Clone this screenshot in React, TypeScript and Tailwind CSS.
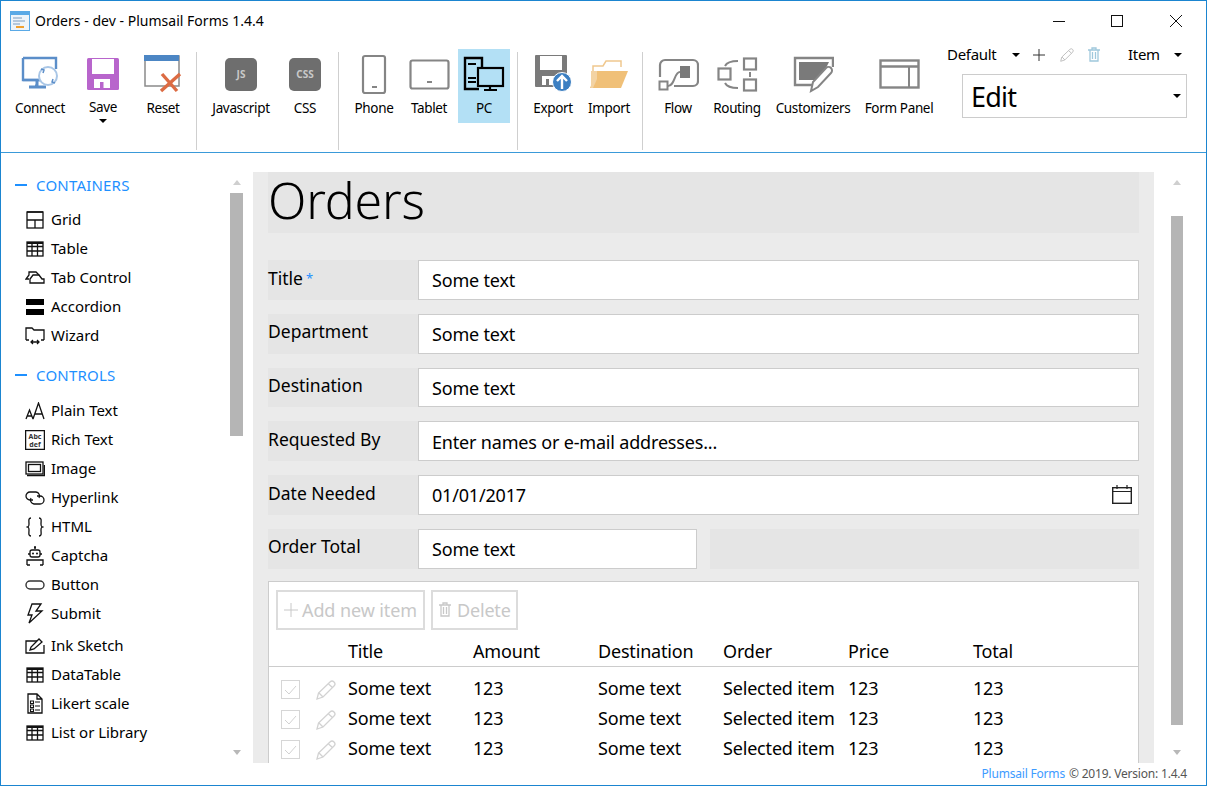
import React from "react";

const font = "font-['Noto_Sans','Open_Sans',sans-serif]";

function Svg({ w, h, children, className }: { w: number; h: number; children: React.ReactNode; className?: string }) {
  return (
    <svg width={w} height={h} viewBox={`0 0 ${w} ${h}`} fill="none" className={"block shrink-0 " + (className ?? "")}>
      {children}
    </svg>
  );
}

const ConnectIcon = () => (
  <Svg w={38} h={36}>
    <path d="M2 2h33v11M20 24H2V2" stroke="#5b8ec9" strokeWidth="2.4" />
    <path d="M2 24h20" stroke="#5b8ec9" strokeWidth="2.4" />
    <path d="M16 25v5h-2M8 31h17" stroke="#5b8ec9" strokeWidth="3" />
    <circle cx="27" cy="20" r="9" fill="#fff" stroke="#a9c6e6" strokeWidth="2" />
    <path d="M20 13l3 1-1 3M34 27l-3-1 1-3" stroke="#5b8ec9" strokeWidth="1.5" />
  </Svg>
);
const SaveIcon = () => (
  <Svg w={32} h={32}>
    <rect x="0" y="0" width="32" height="32" rx="1.500" fill="#b865cc" />
    <rect x="5" y="1" width="22" height="15" fill="#fff" />
    <rect x="7" y="21" width="16" height="9" fill="#fff" />
    <rect x="13" y="24" width="3.500" height="6" fill="#b865cc" />
  </Svg>
);
const ResetIcon = () => (
  <Svg w={38} h={38}>
    <rect x="1" y="1" width="34" height="30" fill="#fff" stroke="#8a8a8a" strokeWidth="1.5" />
    <rect x="0" y="0" width="35" height="6" fill="#4c86c4" />
    <path d="M17 36L36 19M18 19l15 17" stroke="#dc6b43" strokeWidth="3.4" />
  </Svg>
);
const Badge = ({ t, s }: { t: string; s: number }) => (
  <Svg w={32} h={33}>
    <rect x="0" y="0" width="32" height="33" rx="5" fill="#6e6e6e" />
    <text x="16" y="20" textAnchor="middle" fontSize={s} fontWeight="700" fill="#c9c9c9" fontFamily="Noto Sans">{t}</text>
  </Svg>
);
const PhoneIcon = () => (
  <Svg w={26} h={41}>
    <rect x="2" y="2" width="22" height="37" rx="2" fill="#fff" stroke="#858585" strokeWidth="2.2" />
    <rect x="11" y="32" width="5" height="2" fill="#858585" />
  </Svg>
);
const TabletIcon = () => (
  <Svg w={41} h={31}>
    <rect x="1.5" y="1.5" width="38" height="28" rx="2" fill="#fff" stroke="#858585" strokeWidth="2.2" />
    <rect x="18" y="22" width="5" height="2" fill="#858585" />
  </Svg>
);
const PcIcon = () => (
  <Svg w={42} h={36}>
    <path d="M16 33H2V2h17v11" stroke="#000" strokeWidth="2.4" />
    <path d="M5 8h8M5 22h8M5 26h8" stroke="#000" strokeWidth="2" />
    <rect x="15" y="12" width="25" height="18" fill="#b3e0f5" stroke="#000" strokeWidth="2.2" />
    <path d="M27 30v4M21 34h13" stroke="#000" strokeWidth="2.2" />
  </Svg>
);
const ExportIcon = () => (
  <Svg w={37} h={38}>
    <rect x="0" y="0" width="32" height="32" rx="1" fill="#7a7a7a" />
    <rect x="5" y="1" width="22" height="14" fill="#fff" />
    <rect x="7" y="21" width="14" height="9" fill="#fff" />
    <rect x="11" y="24" width="3" height="6" fill="#7a7a7a" />
    <circle cx="27" cy="27" r="9.5" fill="#3c7fc2" stroke="#fff" strokeWidth="1" />
    <path d="M27 34V22M22 26l5-5 5 5" stroke="#fff" strokeWidth="2.4" />
  </Svg>
);
const ImportIcon = () => (
  <Svg w={38} h={29}>
    <path d="M3 25V6h10l3-5h15v6" stroke="#f0c88e" strokeWidth="1.5" />
    <path d="M0 28L7 11h31l-7 17z" fill="#f0c078" />
    <path d="M1 11h6v8l-4 9H1z" fill="#f3d3a3" />
  </Svg>
);
const FlowIcon = () => (
  <Svg w={41} h={33}>
    <path d="M2 19V7a5 5 0 0 1 5-5h28a5 5 0 0 1 5 5v16a5 5 0 0 1-5 5H16" stroke="#858585" strokeWidth="2.2" />
    <rect x="22" y="8" width="10" height="12" fill="#7a7a7a" />
    <path d="M22 14c-6 0-5 14-12 14" stroke="#858585" strokeWidth="2" />
    <rect x="1.5" y="23.5" width="8" height="8" fill="#fff" stroke="#858585" strokeWidth="2" />
  </Svg>
);
const RoutingIcon = () => (
  <Svg w={41} h={35}>
    <rect x="1.5" y="11.5" width="12" height="11" stroke="#858585" strokeWidth="2.2" />
    <rect x="27" y="1.5" width="12" height="11" stroke="#858585" strokeWidth="2.2" />
    <rect x="27" y="22.5" width="12" height="11" stroke="#858585" strokeWidth="2.2" />
    <path d="M33 15v5M8 9c2-4 7-5 13-5M8 26c2 4 7 5 13 5" stroke="#858585" strokeWidth="2" />
  </Svg>
);
const CustomizersIcon = () => (
  <Svg w={41} h={37}>
    <path d="M26 29H2V2h38v9" stroke="#858585" strokeWidth="2.4" />
    <path d="M6 6h30L27 24H6z" fill="#7a7a7a" />
    <path d="M18 35l2-9 13-14a3 3 0 0 1 5 5L25 31z" fill="#fff" stroke="#858585" strokeWidth="2" />
  </Svg>
);
const PanelIcon = () => (
  <Svg w={41} h={30}>
    <rect x="1.5" y="1.5" width="38" height="27" fill="#fff" stroke="#858585" strokeWidth="2.4" />
    <path d="M1 7.5h39" stroke="#858585" strokeWidth="2.4" />
    <path d="M30 8v20" stroke="#858585" strokeWidth="2" />
  </Svg>
);

const Caret = ({ c = "#000" }: { c?: string }) => (
  <Svg w={8} h={4}><path d="M0 0h8L4 4z" fill={c} /></Svg>
);

const ribbonGroups = [
  [
    { l: "Connect", c: "w-[60px] ml-[9px]", i: <ConnectIcon /> },
    { l: "Save", c: "w-[62px] ml-[2px]", i: <SaveIcon />, caret: true },
    { l: "Reset", c: "w-[54px] ml-[2px]", i: <ResetIcon /> },
  ],
  [
    { l: "Javascript", c: "w-[70px] ml-[9px]", i: <Badge t="JS" s={10} /> },
    { l: "CSS", c: "w-[50px] ml-[4px]", i: <Badge t="CSS" s={10} /> },
  ],
  [
    { l: "Phone", c: "w-[52px] ml-[9px]", i: <PhoneIcon /> },
    { l: "Tablet", c: "w-[52px] ml-[3px]", i: <TabletIcon /> },
    { l: "PC", c: "w-[52px] ml-[3px] bg-[#b3e0f5]", i: <PcIcon /> },
  ],
  [
    { l: "Export", c: "w-[56px] ml-[7px]", i: <ExportIcon /> },
    { l: "Import", c: "w-[52px] ml-[2px]", i: <ImportIcon /> },
  ],
  [
    { l: "Flow", c: "w-[52px] ml-[9px]", i: <FlowIcon /> },
    { l: "Routing", c: "w-[58px] ml-[4px]", i: <RoutingIcon /> },
    { l: "Customizers", c: "w-[82px] ml-[6px]", i: <CustomizersIcon /> },
    { l: "Form Panel", c: "w-[80px] ml-[5px]", i: <PanelIcon /> },
  ],
];
const sepMargins = ["ml-[6px]", "ml-[8px]", "ml-[7px]", "ml-[7px]"];

function RibbonButton({ l, c, i, caret }: { l: string; c: string; i: React.ReactNode; caret?: boolean }) {
  return (
    <div className={"relative h-[74px] flex flex-col items-center shrink-0 " + c}>
      <div className="h-[50px] flex items-center justify-center">{i}</div>
      <div className="text-[13.5px] leading-[18px] tracking-[-0.35px] whitespace-nowrap">{l}</div>
      {caret && <div className="mt-[3px]"><Caret /></div>}
    </div>
  );
}

const s = { stroke: "#111", strokeWidth: 1.3 };
const GridI = () => (
  <Svg w={18} h={18}><rect x="1" y="1" width="16" height="16" {...s} /><path d="M1 9h16M9 9v8M1 1h16" {...s} /></Svg>
);
const TableI = () => (
  <Svg w={18} h={16}><rect x="1" y="1" width="16" height="14" {...s} /><path d="M1 5.5h16M1 10h16M6 1v14M11.5 1v14" {...s} /><path d="M1 2h16" stroke="#111" strokeWidth="2" /></Svg>
);
const TabI = () => (
  <Svg w={20} h={13}><path d="M4 8H1l3-4V1h7l3 3" {...s} /><path d="M5 12V8l3-4h6l3 4h2v4z" {...s} /></Svg>
);
const AccI = () => (
  <Svg w={18} h={18}><rect x="0" y="1" width="18" height="6" fill="#000" /><rect x="0" y="11" width="18" height="6" fill="#000" /></Svg>
);
const WizI = () => (
  <Svg w={20} h={18}><path d="M1 13V1h6l2 2h10v10M1 13h3M16 13h3" {...s} /><path d="M6 15h8M8 13l-2 2 2 2M12 13l2 2-2 2" {...s} /></Svg>
);
const PlainI = () => (
  <Svg w={20} h={18}><path d="M1 17l3.5-9L8 17M2 14h5M8 17L13.5 1 19 17M10 12h7" {...s} /></Svg>
);
const RichI = () => (
  <Svg w={20} h={20}>
    <rect x="0.6" y="0.6" width="18.8" height="18.8" {...s} />
    <text x="10" y="8.500" textAnchor="middle" fontSize="7" fontWeight="700" fill="#333" fontFamily="Noto Sans">Abc</text>
    <text x="10" y="17" textAnchor="middle" fontSize="7" fontWeight="700" fill="#333" fontFamily="Noto Sans">def</text>
  </Svg>
);
const ImageI = () => (
  <Svg w={20} h={16}><rect x="1" y="1" width="17" height="12" {...s} /><rect x="3.5" y="3.5" width="12" height="7" {...s} /><path d="M2 14.5h17.5V4" stroke="#111" strokeWidth="1.6" /></Svg>
);
const LinkI = () => (
  <Svg w={20} h={14}><path d="M8 9H5a4 4 0 0 1 0-8h6a4 4 0 0 1 3 6" {...s} /><path d="M12 5h3a4 4 0 0 1 0 8H9a4 4 0 0 1-3-6" {...s} /></Svg>
);
const CurlyI = () => (
  <Svg w={20} h={20}><path d="M6 1C3 1 4 4 4 7s-1 3-2.500 3C3 10 4 10 4 13s-1 6 2 6M14 1c3 0 2 3 2 6s1 3 2.500 3C17 10 16 10 16 13s1 6-2 6" {...s} /></Svg>
);
const BotI = () => (
  <Svg w={18} h={20}><path d="M9 0v3" {...s} /><circle cx="9" cy="1.5" r="1" fill="#111" /><rect x="4" y="4" width="10" height="7" rx="2" {...s} /><circle cx="7" cy="7.500" r="1" fill="#111" /><circle cx="11" cy="7.500" r="1" fill="#111" /><path d="M2 8h2M14 8h2M1 19v-5h16v5" {...s} /><path d="M1 19h3M14 19h3" {...s} /></Svg>
);
const BtnI = () => (
  <Svg w={20} h={10}><rect x="1" y="1" width="18" height="8" rx="4" stroke="#333" strokeWidth="1.400" /></Svg>
);
const BoltI = () => (
  <Svg w={18} h={21}><path d="M11 1H6L2 12h4l-3 8L16 8h-6l5-7z" {...s} /></Svg>
);
const InkI = () => (
  <Svg w={20} h={16}><path d="M12 3H1v12h18V7" {...s} /><path d="M5 12l1-3 8-8 3 3-8 7z" {...s} /></Svg>
);
const LikertI = () => (
  <Svg w={16} h={21}><path d="M1 1h9l5 5v14H1zM10 1v5h5" {...s} /><path d="M3.500 8h3v2.500h-3zM3.500 12h3v2.500h-3zM3.500 16h3v2.500h-3zM8 9h5M8 13h5M8 17h5" stroke="#111" strokeWidth="1.1" /></Svg>
);

const containers: [string, React.ReactNode][] = [
  ["Grid", <GridI />],
  ["Table", <TableI />],
  ["Tab Control", <TabI />],
  ["Accordion", <AccI />],
  ["Wizard", <WizI />],
];
const controls: [string, React.ReactNode][] = [
  ["Plain Text", <PlainI />],
  ["Rich Text", <RichI />],
  ["Image", <ImageI />],
  ["Hyperlink", <LinkI />],
  ["HTML", <CurlyI />],
  ["Captcha", <BotI />],
  ["Button", <BtnI />],
  ["Submit", <BoltI />],
];
const controls2: [string, React.ReactNode][] = [
  ["Ink Sketch", <InkI />],
  ["DataTable", <TableI />],
  ["Likert scale", <LikertI />],
  ["List or Library", <TableI />],
];

function SideItems({ items }: { items: [string, React.ReactNode][] }) {
  return (
    <>
      {items.map(([t, i]) => (
        <div key={t} className="h-[29px] flex items-center pl-[24px]">
          <div className="w-[20px] flex justify-center">{i}</div>
          <div className="ml-[6px] text-[15px] tracking-[-0.03px] whitespace-nowrap">{t}</div>
        </div>
      ))}
    </>
  );
}

function SideHead({ t, c }: { t: string; c: string }) {
  return (
    <div className={"h-[20px] flex items-center pl-[14px] " + c}>
      <div className="w-[12px] h-[2px] bg-[#1e90ff]" />
      <div className="ml-[9px] text-[15px] tracking-[0.2px] text-[#1e90ff]">{t}</div>
    </div>
  );
}

const Up = () => <Svg w={8} h={5}><path d="M4 0l4 5H0z" fill="#cfcfcf" /></Svg>;
const Down = () => <Svg w={8} h={5}><path d="M4 5l4-5H0z" fill="#b8b8b8" /></Svg>;

function Row({ label, star, value, right }: { label: string; star?: boolean; value: string; right?: React.ReactNode }) {
  return (
    <div className="flex h-[39.750px]">
      <div className="w-[150px] bg-[#e5e5e5] text-[17.500px] pt-[4.500px] leading-[26px] whitespace-nowrap">
        {label}
        {star && <span className="text-[#1e90ff] text-[13px] ml-[3px] align-top">*</span>}
      </div>
      <div className="flex-1 bg-white border border-[#ccc] flex items-center pl-[13px] pr-[6px] text-[18px] tracking-[-0.18px] justify-between">
        <span className="pt-[2px]">{value}</span>
        {right}
      </div>
    </div>
  );
}

const Pencil = ({ c = "#d2d2d2", w = 20 }: { c?: string; w?: number }) => (
  <svg width={w} height={w} viewBox="0 0 20 20" fill="none" className="block shrink-0">
    <path d="M1 19l1.500-6L14 2a2.500 2.500 0 0 1 4 4L7 17z" stroke={c} strokeWidth="1.300" />
    <path d="M3 13l4 4M12.500 4l4 3.500" stroke={c} strokeWidth="1.300" />
  </svg>
);
const Trash = ({ c = "#c8c8c8" }: { c?: string }) => (
  <Svg w={12} h={15}>
    <path d="M0 3h12M4 3V1h4v2M2 3v11h8V3" stroke={c} strokeWidth="1.300" />
    <path d="M4.500 5v7M7.500 5v7" stroke={c} strokeWidth="1.300" />
  </Svg>
);

const cols = ["Title", "Amount", "Destination", "Order", "Price", "Total"];
const vals = ["Some text", "123", "Some text", "Selected item", "123", "123"];

export default function App() {
  return (
    <div className={"w-[1207px] h-[786px] bg-white border border-[#1b85d0] flex flex-col overflow-hidden text-black " + font}>
      {/* title bar */}
      <div className="h-[39px] flex items-center shrink-0">
        <div className="ml-[9px]">
          <Svg w={20} h={20}>
            <rect x="0" y="0" width="20" height="20" fill="#5aa9e6" />
            <rect x="1" y="4" width="18" height="15" fill="#eef4fa" />
            <path d="M3 7h9M3 10h12M3 13h7" stroke="#7a9cc0" strokeWidth="1" />
            <rect x="6" y="15" width="8" height="2" fill="#f0a030" />
          </Svg>
        </div>
        <div className="ml-[5px] text-[14px] tracking-[0.02px]">Orders - dev - Plumsail Forms 1.4.4</div>
        <div className="ml-auto flex items-center">
          <Svg w={12} h={12}><path d="M0 6.500h12" stroke="#111" /></Svg>
          <div className="ml-[46px]"><Svg w={12} h={12}><rect x="0.500" y="0.500" width="11" height="11" stroke="#111" /></Svg></div>
          <div className="ml-[47px] mr-[24px]"><Svg w={12} h={12}><path d="M0 0l12 12M12 0L0 12" stroke="#111" /></Svg></div>
        </div>
      </div>
      {/* ribbon */}
      <div className="h-[113px] border-b border-[#3a9ad9] flex shrink-0">
        <div className="flex items-start pt-[9px]">
          {ribbonGroups.map((g, gi) => (
            <React.Fragment key={gi}>
              {g.map((b) => (
                <RibbonButton key={b.l} {...b} />
              ))}
              {gi < 4 && <div className={"w-px h-[98px] mt-[3px] bg-[#cfcfcf] shrink-0 " + sepMargins[gi]} />}
            </React.Fragment>
          ))}
        </div>
        <div className="ml-auto mr-[19px] w-[240px] pt-[4px]">
          <div className="flex items-center h-[21px] text-[15px] tracking-[-0.3px]">
            <span className="w-[65px]">Default</span>
            <Caret />
            <div className="ml-[12px]"><Svg w={14} h={14}><path d="M7 1v12M1 7h12" stroke="#333" strokeWidth="1" /></Svg></div>
            <div className="ml-[14px]"><Pencil c="#bbb" w={14} /></div>
            <div className="ml-[14px]"><Trash c="#9fc8dc" /></div>
            <span className="ml-[28px] w-[50px]">Item</span>
            <div className="ml-[-4px]"><Caret /></div>
          </div>
          <div className="ml-[15px] mt-[9px] h-[44px] border border-[#ccc] flex items-center justify-between pl-[8px] pr-[5px] text-[27px] tracking-[-0.8px]">
            <span className="pt-[3px]">Edit</span>
            <Caret />
          </div>
        </div>
      </div>
      {/* body */}
      <div className="h-[610px] flex shrink-0">
        <aside className="w-[252px] flex shrink-0">
          <div className="w-[229px] shrink-0 pt-[22px]">
            <SideHead t="CONTAINERS" c="" />
            <div className="mt-[10px]"><SideItems items={containers} /></div>
            <SideHead t="CONTROLS" c="mt-[15px]" />
            <div className="mt-[11px]"><SideItems items={controls} /></div>
            <div className="mt-[3px]"><SideItems items={controls2} /></div>
          </div>
          <div className="w-[13px] shrink-0 flex flex-col items-center pt-[27px] pb-[8px]">
            <Up />
            <div className="w-[13px] h-[243px] mt-[8px] bg-[#b5b5b5]" />
            <div className="mt-auto"><Down /></div>
          </div>
        </aside>
        <main className="w-[901px] shrink-0 mt-[19px] h-[591px] bg-[#ebebeb] px-[15px] overflow-hidden">
          <div className="h-[61px] bg-[#e5e5e5] text-[50px] leading-[56px] font-light tracking-[-0.17px] whitespace-nowrap">Orders</div>
          <div className="mt-[27px] flex flex-col gap-[14px]">
            <Row label="Title" star value="Some text" />
            <Row label="Department" value="Some text" />
            <Row label="Destination" value="Some text" />
            <Row label="Requested By" value="Enter names or e-mail addresses..." />
            <Row
              label="Date Needed"
              value="01/01/2017"
              right={
                <Svg w={20} h={19}>
                  <rect x="0.700" y="2.700" width="18.600" height="15.600" stroke="#222" strokeWidth="1.400" />
                  <path d="M1 6.500h18M5 0v4M15 0v4" stroke="#222" strokeWidth="1.200" />
                </Svg>
              }
            />
            <div className="flex h-[39.750px]">
              <div className="w-[150px] bg-[#e5e5e5] text-[17.500px] pt-[4.500px] leading-[26px]">Order Total</div>
              <div className="w-[279px] bg-white border border-[#ccc] flex items-center pl-[13px] text-[18px] tracking-[-0.18px]"><span className="pt-[2px]">Some text</span></div>
              <div className="flex-1 ml-[13px] bg-[#e5e5e5]" />
            </div>
          </div>
          <div className="mt-[12.500px] h-[200px] bg-white border border-[#ccc]">
            <div className="flex pt-[7.500px] pl-[7px] gap-[6px]">
              <div className="w-[149px] h-[40px] border-2 border-[#dcdcdc] flex items-center pl-[6px] text-[18px] tracking-[-0.1px] text-[#c8c8c8] whitespace-nowrap">
                <Svg w={14} h={14}><path d="M7 0v14M0 7h14" stroke="#c8c8c8" /></Svg>
                <span className="ml-[4px] pt-[2px]">Add new item</span>
              </div>
              <div className="w-[87px] h-[40px] border-2 border-[#dcdcdc] flex items-center pl-[6px] text-[18px] tracking-[-0.18px] text-[#c8c8c8]">
                <Trash />
                <span className="ml-[6px] pt-[2px]">Delete</span>
              </div>
            </div>
            <div className="h-[37px] border-b border-[#ccc] flex pl-[79px] pt-[6px] text-[18px] tracking-[-0.18px] leading-[30px]">
              {cols.map((c) => (
                <div key={c} className="w-[125px] shrink-0">{c}</div>
              ))}
            </div>
            <div className="pt-[7px]">
              {[0, 1, 2].map((r) => (
                <div key={r} className="h-[30px] flex items-center text-[18px] tracking-[-0.18px]">
                  <div className="w-[79px] flex items-center pl-[12px] shrink-0">
                    <div className="w-[19px] h-[19px] mt-[2px] border border-[#d6d6d6] flex items-center justify-center">
                      <Svg w={13} h={10}><path d="M1 5l4 4 7-8" stroke="#d2d2d2" /></Svg>
                    </div>
                    <div className="ml-[16px] mt-[2px]"><Pencil /></div>
                  </div>
                  {vals.map((v, i) => (
                    <div key={i} className="w-[125px] shrink-0 whitespace-nowrap">{v}</div>
                  ))}
                </div>
              ))}
            </div>
          </div>
        </main>
        <div className="ml-[17px] w-[12px] shrink-0 flex flex-col items-center pt-[27px] pb-[8px]">
          <Up />
          <div className="w-[12px] h-[509px] mt-[31px] bg-[#b5b5b5]" />
          <div className="mt-auto"><Down /></div>
        </div>
      </div>
      {/* footer */}
      <div className="flex-1 flex items-center justify-end pr-[19px] text-[12px] tracking-[-0.2px] text-[#555]">
        <span className="text-[#3d9bff]">Plumsail Forms</span>
        <span className="ml-[4px]">© 2019. Version: 1.4.4</span>
      </div>
    </div>
  );
}
